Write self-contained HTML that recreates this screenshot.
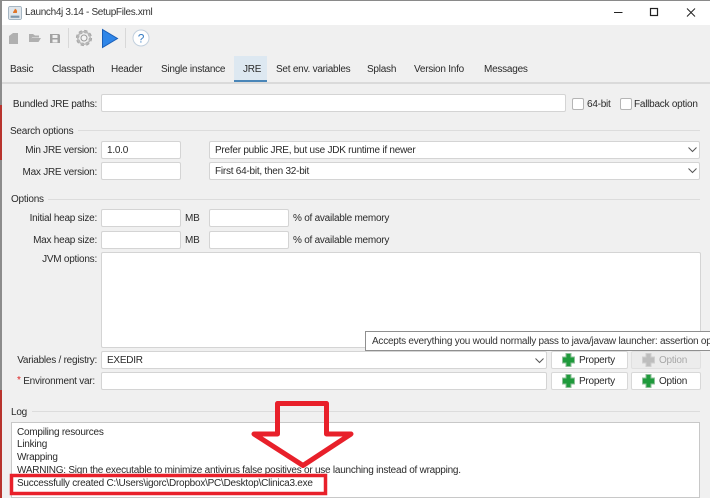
<!DOCTYPE html>
<html><head><meta charset="utf-8">
<style>
html,body{margin:0;padding:0}
body{width:710px;height:498px;overflow:hidden;position:relative;background:#f0f0f0;font-family:"Liberation Sans",sans-serif;font-size:10px;letter-spacing:-.24px;color:#2a2a2a}
.t{position:absolute;white-space:nowrap;line-height:14px;height:14px}
.r{text-align:right}
.f{position:absolute;background:#fff;border:1px solid #d4d4d4;border-radius:2px;box-sizing:border-box;line-height:18px;padding-left:5px;white-space:nowrap}
.b{position:absolute;background:#fff;border:1px solid #d8d8d8;border-radius:2px;box-sizing:border-box;line-height:18px;white-space:nowrap}
.line{position:absolute;height:1px;background:#dcdcdc}
.c{position:absolute;width:10px;height:10px;background:#fff;border:1px solid #b5b5b5;border-radius:2px}
svg{position:absolute;overflow:visible}
</style></head><body>
<div style="position:absolute;left:0;top:0;width:710px;height:25px;background:#fff"></div>
<div style="position:absolute;left:0;top:0;width:710px;height:1px;background:#8a8a8a"></div>
<div style="position:absolute;left:0;top:0;width:2px;height:498px;background:#8c8c8c"></div>
<div style="position:absolute;left:0;top:105px;width:2px;height:55px;background:#b8342e"></div>
<div style="position:absolute;left:0;top:390px;width:2px;height:108px;background:#b8342e"></div>

<svg style="left:8px;top:6px" width="14" height="14" viewBox="0 0 16 16"><rect x=".5" y=".5" width="15" height="15" rx="2" fill="#dfe6ec" stroke="#9fb0bd"/><path d="M3 11h10v2.500H3z" fill="#7d96ab"/><path d="M8 3c2 1 3 3 2 5H6c-1-1 1-2 2-5z" fill="#e0762a"/></svg>
<div class="t" style="left:25px;top:6px;letter-spacing:-.33px;color:#333">Launch4j 3.14 - SetupFiles.xml</div>
<svg style="left:614px;top:6px" width="90" height="14" viewBox="0 0 90 14" fill="none" stroke="#222"><path d="M0 6.500h8.500"/><rect x="36.500" y="2.500" width="7" height="7" stroke-width="1.200"/><path d="M73 2.500l8 8M81 2.500l-8 8"/></svg>

<svg style="left:0;top:0" width="160" height="60" viewBox="0 0 160 60">
<path d="M9 36l4-3h5v11H9z" fill="#b0b0b0"/>
<path d="M29 34h4l2 1.500h4v2h-7l-2 4.500h-1zM32 38h9l-2.500 4H29z" fill="#b0b0b0"/>
<path d="M50 34h9l1 1v8H50zM52.500 35v3h5v-3zM52.500 39.500v3h5v-3z" fill="#a2a2a2" fill-rule="evenodd"/>
<path d="M68.500 28v20" stroke="#d8d8d8"/>
<g transform="translate(84,38)"><circle r="6.500" fill="none" stroke="#a8a8a8" stroke-width="3.200" stroke-dasharray="3 2.100"/><circle r="6.200" fill="none" stroke="#b8b8b8" stroke-width="1.500"/><circle r="3" fill="#f4f4f4" stroke="#999"/></g>
<path d="M102.500 29.500L117.500 38.500 102.500 47.500z" fill="#2f86e8" stroke="#1a5fb8"/>
<path d="M125.500 28v20" stroke="#d8d8d8"/>
<circle cx="141" cy="38" r="8" fill="#fff" stroke="#c2d0de"/>
<text x="141" y="42.500" text-anchor="middle" font-family="Liberation Sans" font-size="12" fill="#3b7fc4">?</text>
</svg>

<div class="t" style="left:10px;top:63px">Basic</div>
<div class="t" style="left:52px;top:63px">Classpath</div>
<div class="t" style="left:111px;top:63px">Header</div>
<div class="t" style="left:161px;top:63px">Single instance</div>
<div style="position:absolute;left:234px;top:56px;width:33px;height:24px;background:#dde8f1"></div>
<div style="position:absolute;left:234px;top:80px;width:33px;height:2px;background:#4a86b8"></div>
<div class="t" style="left:243px;top:63px">JRE</div>
<div class="t" style="left:276px;top:63px">Set env. variables</div>
<div class="t" style="left:367px;top:63px">Splash</div>
<div class="t" style="left:414px;top:63px">Version Info</div>
<div class="t" style="left:484px;top:63px">Messages</div>
<div class="line" style="left:2px;top:82px;width:708px;height:2px;background:#dadada"></div>

<div class="t r" style="left:0;width:97px;top:98px">Bundled JRE paths:</div>
<div class="f" style="left:101px;top:94px;width:465px;height:18px"></div>
<div class="c" style="left:572px;top:98px"></div>
<div class="t" style="left:587px;top:98px">64-bit</div>
<div class="c" style="left:620px;top:98px"></div>
<div class="t" style="left:634px;top:98px">Fallback option</div>

<div class="t" style="left:10px;top:125px">Search options</div>
<div class="line" style="left:78px;top:130px;width:622px"></div>
<div class="t r" style="left:0;width:97px;top:144px">Min JRE version:</div>
<div class="f" style="left:101px;top:141px;width:80px;height:18px">1.0.0</div>
<div class="f" style="left:209px;top:141px;width:491px;height:18px">Prefer public JRE, but use JDK runtime if newer</div>
<div class="t r" style="left:0;width:97px;top:166px">Max JRE version:</div>
<div class="f" style="left:101px;top:162px;width:80px;height:18px"></div>
<div class="f" style="left:209px;top:162px;width:491px;height:18px">First 64-bit, then 32-bit</div>
<svg style="left:688px;top:147px" width="10" height="28" fill="none" stroke="#555"><path d="M.5 .5l4 4 4-4M.5 21.500l4 4 4-4"/></svg>

<div class="t" style="left:11px;top:193px">Options</div>
<div class="line" style="left:48px;top:199px;width:652px"></div>
<div class="t r" style="left:0;width:97px;top:212px">Initial heap size:</div>
<div class="f" style="left:101px;top:209px;width:80px;height:18px"></div>
<div class="t" style="left:185px;top:212px">MB</div>
<div class="f" style="left:209px;top:209px;width:80px;height:18px"></div>
<div class="t" style="left:293px;top:212px">% of available memory</div>
<div class="t r" style="left:0;width:97px;top:234px">Max heap size:</div>
<div class="f" style="left:101px;top:231px;width:80px;height:18px"></div>
<div class="t" style="left:185px;top:234px">MB</div>
<div class="f" style="left:209px;top:231px;width:80px;height:18px"></div>
<div class="t" style="left:293px;top:234px">% of available memory</div>
<div class="t r" style="left:0;width:97px;top:253px">JVM options:</div>
<div class="f" style="left:101px;top:252px;width:600px;height:96px"></div>

<div class="t r" style="left:0;width:97px;top:354px">Variables / registry:</div>
<div class="f" style="left:101px;top:351px;width:446px;height:18px">EXEDIR</div>
<svg style="left:535px;top:358px" width="10" height="6" fill="none" stroke="#555"><path d="M.5 .5l4 4 4-4"/></svg>
<div class="b" style="left:551px;top:351px;width:77px;height:18px;padding-left:27px">Property</div>
<div class="b" style="left:631px;top:351px;width:70px;height:18px;padding-left:27px;background:#ececec;color:#a8a8a8;border-color:#e0e0e0">Option</div>

<div class="t" style="left:17px;top:375px"><span style="color:#d22;position:relative;top:-1px">*</span> Environment var:</div>
<div class="f" style="left:101px;top:372px;width:446px;height:18px"></div>
<div class="b" style="left:551px;top:372px;width:77px;height:18px;padding-left:27px">Property</div>
<div class="b" style="left:631px;top:372px;width:70px;height:18px;padding-left:27px">Option</div>
<svg style="left:0;top:0" width="710" height="498">
<g fill="#1f9a3c" stroke="#8fc09a" stroke-width="1"><path d="M566 353.500h5v3.500h3.500v6H571v3.500h-5V363h-3.500v-6h3.500z"/><path d="M566 374.500h5v3.500h3.500v6H571v3.500h-5V384h-3.500v-6h3.500z"/><path d="M646 374.500h5v3.500h3.500v6H651v3.500h-5V384h-3.500v-6h3.500z"/></g>
<path d="M646 353.500h5v3.500h3.500v6H651v3.500h-5V363h-3.500v-6h3.500z" fill="#bdbdbd" stroke="#cfcfcf" stroke-width="1"/>
</svg>

<div style="position:absolute;left:365px;top:331px;width:345px;height:20px;background:#fff;border:1px solid #8f8f8f;border-right:0;box-sizing:border-box;overflow:hidden;white-space:nowrap;line-height:19px;padding-left:6px;color:#333">Accepts everything you would normally pass to java/javaw launcher: assertion options</div>

<div class="t" style="left:11px;top:406px">Log</div>
<div class="line" style="left:32px;top:411px;width:668px"></div>
<div style="position:absolute;left:11px;top:422px;width:689px;height:76px;background:#fff;border:1px solid #c8c8c8;box-sizing:border-box"></div>
<div class="t" style="left:17px;top:426px;line-height:13px">Compiling resources</div>
<div class="t" style="left:17px;top:438px;line-height:13px">Linking</div>
<div class="t" style="left:17px;top:451px;line-height:13px">Wrapping</div>
<div class="t" style="left:17px;top:464px;line-height:13px">WARNING: Sign the executable to minimize antivirus false positives or use launching instead of wrapping.</div>
<div class="t" style="left:17px;top:477px;line-height:13px">Successfully created C:\Users\igorc\Dropbox\PC\Desktop\Clinica3.exe</div>

<svg style="left:0;top:0" width="710" height="498" fill="none" stroke="#e8202a">
<rect x="11.500" y="475.500" width="314" height="18" stroke-width="3.500"/>
<path d="M277.500 403.500H326.500V434H351L303 465.500 254 434H277.500Z" stroke-width="5" stroke-linejoin="round"/>
</svg>
</body></html>
